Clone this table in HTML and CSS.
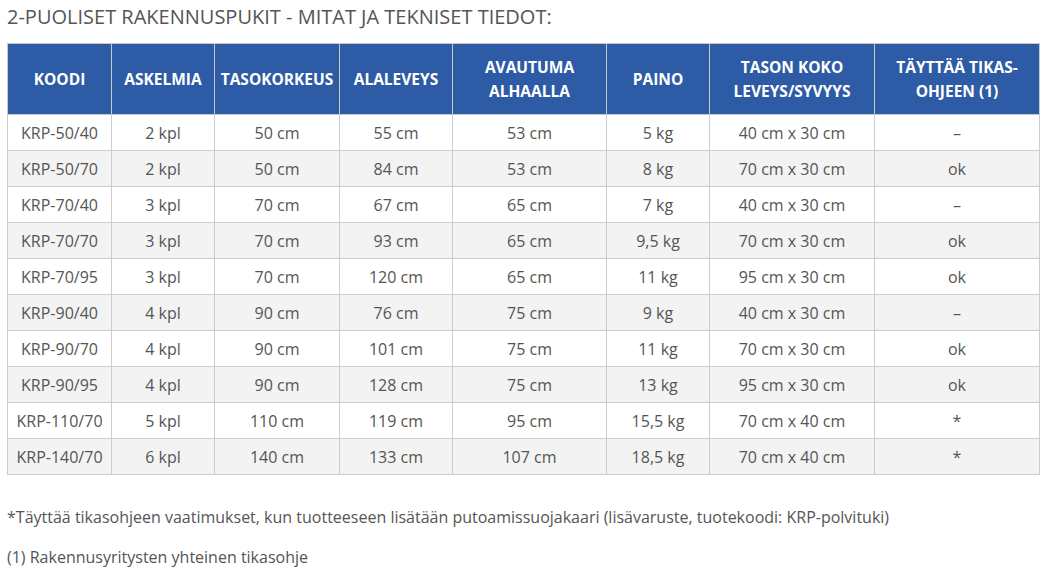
FILE: index.html
```html
<!DOCTYPE html>
<html lang="fi">
<head>
<meta charset="utf-8">
<link rel="stylesheet" href="styles.css">
</head>
<body>
<div class="page">
  <h2 class="title">2-PUOLISET RAKENNUSPUKIT - MITAT JA TEKNISET TIEDOT:</h2>
  <table class="spec">
    <colgroup>
      <col class="c1"><col class="c2"><col class="c3"><col class="c4"><col class="c5"><col class="c6"><col class="c7"><col class="c8">
    </colgroup>
    <thead>
      <tr>
        <th>KOODI</th><th>ASKELMIA</th><th>TASOKORKEUS</th><th>ALALEVEYS</th><th>AVAUTUMA<br>ALHAALLA</th><th>PAINO</th><th>TASON KOKO<br>LEVEYS/SYVYYS</th><th>TÄYTTÄÄ TIKAS-<br>OHJEEN (1)</th>
      </tr>
    </thead>
    <tbody>
      <tr><td>KRP-50/40</td><td>2 kpl</td><td>50 cm</td><td>55 cm</td><td>53 cm</td><td>5 kg</td><td>40 cm x 30 cm</td><td>–</td></tr>
      <tr><td>KRP-50/70</td><td>2 kpl</td><td>50 cm</td><td>84 cm</td><td>53 cm</td><td>8 kg</td><td>70 cm x 30 cm</td><td>ok</td></tr>
      <tr><td>KRP-70/40</td><td>3 kpl</td><td>70 cm</td><td>67 cm</td><td>65 cm</td><td>7 kg</td><td>40 cm x 30 cm</td><td>–</td></tr>
      <tr><td>KRP-70/70</td><td>3 kpl</td><td>70 cm</td><td>93 cm</td><td>65 cm</td><td>9,5 kg</td><td>70 cm x 30 cm</td><td>ok</td></tr>
      <tr><td>KRP-70/95</td><td>3 kpl</td><td>70 cm</td><td>120 cm</td><td>65 cm</td><td>11 kg</td><td>95 cm x 30 cm</td><td>ok</td></tr>
      <tr><td>KRP-90/40</td><td>4 kpl</td><td>90 cm</td><td>76 cm</td><td>75 cm</td><td>9 kg</td><td>40 cm x 30 cm</td><td>–</td></tr>
      <tr><td>KRP-90/70</td><td>4 kpl</td><td>90 cm</td><td>101 cm</td><td>75 cm</td><td>11 kg</td><td>70 cm x 30 cm</td><td>ok</td></tr>
      <tr><td>KRP-90/95</td><td>4 kpl</td><td>90 cm</td><td>128 cm</td><td>75 cm</td><td>13 kg</td><td>95 cm x 30 cm</td><td>ok</td></tr>
      <tr><td>KRP-110/70</td><td>5 kpl</td><td>110 cm</td><td>119 cm</td><td>95 cm</td><td>15,5 kg</td><td>70 cm x 40 cm</td><td>*</td></tr>
      <tr><td>KRP-140/70</td><td>6 kpl</td><td>140 cm</td><td>133 cm</td><td>107 cm</td><td>18,5 kg</td><td>70 cm x 40 cm</td><td>*</td></tr>
    </tbody>
  </table>
  <p class="note">*Täyttää tikasohjeen vaatimukset, kun tuotteeseen lisätään putoamissuojakaari (lisävaruste, tuotekoodi: KRP-polvituki)</p>
  <p class="note">(1) Rakennusyritysten yhteinen tikasohje</p>
</div>
</body>
</html>
```
FILE: styles.css
```css
html, body {
  margin: 0;
  padding: 0;
  background: #fff;
}
.page {
  padding: 3px 7px 0 7px;
  font-family: "Open Sans", "Liberation Sans", sans-serif;
  color: #555;
}
.title {
  margin: 0;
  font-size: 20px;
  font-weight: 400;
  line-height: 28px;
  color: #555;
}
.spec {
  margin-top: 12px;
  border-collapse: collapse;
  table-layout: fixed;
  width: 1033px;
  font-size: 16px;
}
.c1 { width: 104px; }
.c2 { width: 103px; }
.c3 { width: 125px; }
.c4 { width: 113px; }
.c5 { width: 154px; }
.c6 { width: 103px; }
.c7 { width: 165px; }
.c8 { width: 165px; }
.spec th {
  background: #2e5ba5;
  color: #fff;
  font-size: 15.5px;
  font-weight: 700;
  line-height: 24px;
  height: 70px;
  padding: 0 2px;
  border: 1px solid #c8c8c8;
  text-align: center;
  vertical-align: middle;
}
.spec td {
  height: 35px;
  padding: 0 4px;
  line-height: 24px;
  border: 1px solid #cccccc;
  text-align: center;
  vertical-align: middle;
  color: #555;
}
.spec tbody tr:nth-child(even) td {
  background: #f3f3f3;
}
.note {
  margin: 0;
  font-size: 16px;
  line-height: 24px;
  color: #555;
}
.spec + .note {
  margin-top: 30px;
}
.note + .note {
  margin-top: 16px;
}
```
